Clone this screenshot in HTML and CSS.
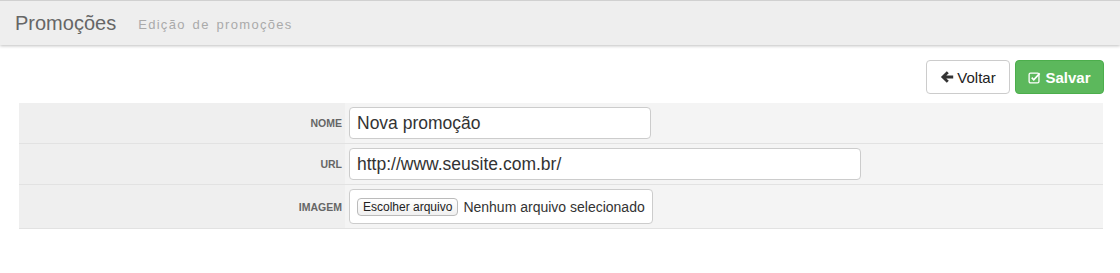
FILE: index.html
```html
<!DOCTYPE html>
<html lang="pt-BR">
<head>
  <meta charset="UTF-8">
  <title>Promoções</title>
  <link rel="stylesheet" href="styles.css">
</head>
<body>
  <div class="page-header">
    <h1>Promoções</h1>
    <span class="subtitle">Edição de promoções</span>
  </div>

  <div class="toolbar">
    <button class="btn btn-default">
      <svg class="icon" viewBox="0 0 14 14" width="14" height="14"><path d="M6.8 1.2 L0.9 7 L6.8 12.8 L8.8 10.8 L6.3 8.4 H13.2 V5.6 H6.3 L8.8 3.2 Z" fill="#333"/></svg>Voltar
    </button>
    <button class="btn btn-success">
      <svg class="icon" viewBox="0 0 14 14" width="13" height="13"><rect x="1.2" y="2.2" width="10.6" height="10.6" rx="1.5" fill="none" stroke="#fff" stroke-width="1.4"/><path d="M4 7.2 L6.2 9.4 L12.6 2.6" fill="none" stroke="#fff" stroke-width="1.8"/></svg>Salvar
    </button>
  </div>

  <table class="form-table">
    <tr>
      <th>Nome</th>
      <td><input type="text" class="field field-md" value="Nova promoção"></td>
    </tr>
    <tr>
      <th>URL</th>
      <td><input type="text" class="field field-lg" value="http://www.seusite.com.br/"></td>
    </tr>
    <tr>
      <th>Imagem</th>
      <td>
        <div class="file-box">
          <span class="file-btn">Escolher arquivo</span>
          <span class="file-name">Nenhum arquivo selecionado</span>
        </div>
      </td>
    </tr>
  </table>
</body>
</html>
```

FILE: styles.css
```css
body {
  margin: 0;
  font-family: "Liberation Sans", Arial, sans-serif;
  color: #333;
  background: #fff;
}

.page-header {
  height: 44px;
  background: #eee;
  border-top: 1px solid #d0d0d0;
  box-shadow: 0 1px 3px rgba(0,0,0,0.25);
  display: flex;
  align-items: center;
  padding-left: 15px;
}

.page-header h1 {
  margin: 0;
  font-size: 20px;
  font-weight: normal;
  color: #666;
}

.subtitle {
  margin-left: 22px;
  margin-top: 2px;
  font-size: 13px;
  color: #aaa;
  letter-spacing: 1.3px;
  word-spacing: 2px;
}

.toolbar {
  display: flex;
  justify-content: flex-end;
  gap: 5px;
  padding: 15px 16px 0 0;
}

.btn {
  height: 34px;
  padding: 0 10px;
  font-family: inherit;
  font-size: 15px;
  border-radius: 4px;
  border: 1px solid #ccc;
  display: flex;
  align-items: center;
  white-space: nowrap;
  cursor: pointer;
}

.btn .icon {
  margin-right: 3px;
}

.btn-default {
  width: 84px;
  background: #fff;
  color: #222;
  justify-content: center;
}

.btn-success {
  width: 89px;
  background: #5cb85c;
  border-color: #4cae4c;
  color: #fff;
  font-weight: bold;
  justify-content: center;
}

.btn-success .icon {
  margin-right: 4px;
}

.form-table {
  margin: 9px 17px 0 19px;
  width: calc(100% - 36px);
  border-collapse: collapse;
  background: #f4f4f4;
}

.form-table tr {
  border-bottom: 1px solid #e2e2e2;
}

.form-table th {
  width: 318px;
  padding: 0 3px 0 5px;
  text-align: right;
  font-size: 10.5px;
  text-transform: uppercase;
  color: #666;
  background: #efefef;
  height: 40px;
}

.form-table td {
  padding: 4px 3px 4px 4px;
}

.field {
  box-sizing: border-box;
  height: 32px;
  padding: 0 7px;
  font-family: inherit;
  font-size: 17.5px;
  color: #333;
  border: 1px solid #ccc;
  border-radius: 4px;
  background: #fff;
  display: block;
}

.field-md {
  width: 302px;
}

.field-lg {
  width: 512px;
}

.file-box {
  box-sizing: border-box;
  width: 304px;
  height: 35px;
  border: 1px solid #ccc;
  border-radius: 4px;
  background: #fff;
  display: flex;
  align-items: center;
  padding-left: 7px;
  gap: 5px;
  white-space: nowrap;
}

.file-btn {
  font-size: 12px;
  color: #222;
  border: 1px solid #bbb;
  border-radius: 4px;
  padding: 1px 5px;
  background: linear-gradient(#fff, #f0f0f0);
}

.file-name {
  font-size: 14px;
  color: #333;
}
```
